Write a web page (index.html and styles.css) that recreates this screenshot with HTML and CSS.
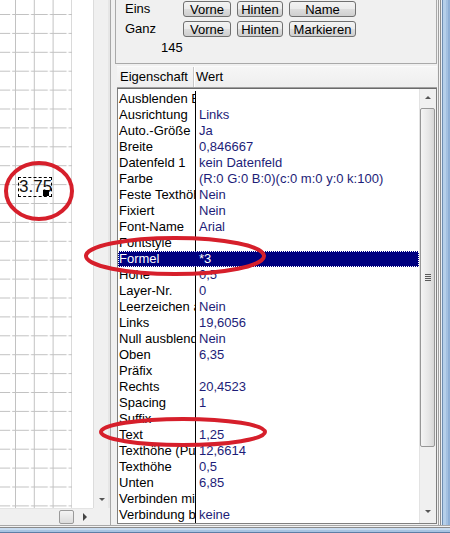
FILE: index.html
```html
<!DOCTYPE html>
<html lang="de">
<head>
<meta charset="utf-8">
<title>Eigenschaften</title>
<link rel="stylesheet" href="styles.css">
</head>
<body>
<div class="window">
  <div class="leftpane">
    <div class="canvas">
      <svg class="grid" width="93" height="508" viewBox="0 0 93 508">
        <defs>
          <pattern id="g" x="15" y="14" width="18.8" height="18.9" patternUnits="userSpaceOnUse">
            <path d="M0.5 0V18.9" stroke="#c2c2c2" stroke-width="1" fill="none"/>
            <path d="M1 0.5H18.8" stroke="#c2c2c2" stroke-width="1" fill="none" stroke-dasharray="13 2"/>
          </pattern>
        </defs>
        <rect x="0" y="0" width="72" height="508" fill="url(#g)"/>
      </svg>
      <div class="textfield">3.75<span class="handle"></span></div>
    </div>
    <div class="vscroll"><span class="tri-down"></span></div>
    <div class="hscroll"><span class="hthumb"></span><span class="tri-right"></span></div>
    <div class="corner"></div>
  </div>

  <div class="rightpane">
    <div class="group">
      <div class="btnrow">
        <span class="lbl">Eins</span>
        <button class="btn w48">Vorne</button>
        <button class="btn w46">Hinten</button>
        <button class="btn w67">Name</button>
      </div>
      <div class="btnrow">
        <span class="lbl">Ganz</span>
        <button class="btn w48">Vorne</button>
        <button class="btn w46">Hinten</button>
        <button class="btn w67">Markieren</button>
      </div>
      <div class="count">145</div>
    </div>

    <div class="header">
      <div class="hcell hname">Eigenschaft</div>
      <div class="hcell hval">Wert</div>
    </div>

    <div class="list">
      <div class="rows">
        <div class="row"><span class="n">Ausblenden Bei</span><span class="v"></span></div>
        <div class="row"><span class="n">Ausrichtung</span><span class="v">Links</span></div>
        <div class="row"><span class="n">Auto.-Größe</span><span class="v">Ja</span></div>
        <div class="row"><span class="n">Breite</span><span class="v">0,846667</span></div>
        <div class="row"><span class="n">Datenfeld 1</span><span class="v">kein Datenfeld</span></div>
        <div class="row"><span class="n">Farbe</span><span class="v">(R:0 G:0 B:0)(c:0 m:0 y:0 k:100)</span></div>
        <div class="row"><span class="n">Feste Texthöhe</span><span class="v">Nein</span></div>
        <div class="row"><span class="n">Fixiert</span><span class="v">Nein</span></div>
        <div class="row"><span class="n">Font-Name</span><span class="v">Arial</span></div>
        <div class="row"><span class="n">Fontstyle</span><span class="v"></span></div>
        <div class="row sel"><span class="n">Formel</span><span class="v">*3</span></div>
        <div class="row"><span class="n">Höhe</span><span class="v">0,5</span></div>
        <div class="row"><span class="n">Layer-Nr.</span><span class="v">0</span></div>
        <div class="row"><span class="n">Leerzeichen ausblenden</span><span class="v">Nein</span></div>
        <div class="row"><span class="n">Links</span><span class="v">19,6056</span></div>
        <div class="row"><span class="n">Null ausblenden</span><span class="v">Nein</span></div>
        <div class="row"><span class="n">Oben</span><span class="v">6,35</span></div>
        <div class="row"><span class="n">Präfix</span><span class="v"></span></div>
        <div class="row"><span class="n">Rechts</span><span class="v">20,4523</span></div>
        <div class="row"><span class="n">Spacing</span><span class="v">1</span></div>
        <div class="row"><span class="n">Suffix</span><span class="v"></span></div>
        <div class="row"><span class="n">Text</span><span class="v">1,25</span></div>
        <div class="row"><span class="n">Texthöhe (Punkt)</span><span class="v">12,6614</span></div>
        <div class="row"><span class="n">Texthöhe</span><span class="v">0,5</span></div>
        <div class="row"><span class="n">Unten</span><span class="v">6,85</span></div>
        <div class="row"><span class="n">Verbinden mit</span><span class="v"></span></div>
        <div class="row"><span class="n">Verbindung bei</span><span class="v">keine</span></div>
      </div>
      <div class="lscroll">
        <div class="sbtn"><span class="tri-up"></span></div>
        <div class="thumb"><span class="grip"></span></div>
        <div class="track"></div>
        <div class="sbtn"><span class="tri-down2"></span></div>
      </div>
    </div>
  </div>

  <div class="frame-right"></div>
  <div class="frame-bottom"></div>
</div>

<svg class="marks" width="450" height="533" viewBox="0 0 450 533">
  <ellipse cx="39" cy="191" rx="33" ry="28"/>
  <ellipse cx="175" cy="256" rx="89" ry="18"/>
  <ellipse cx="183" cy="432" rx="82" ry="13"/>
</svg>
</body>
</html>
```

FILE: styles.css
```css
* { box-sizing: border-box; }

html, body {
  margin: 0;
  padding: 0;
}

body {
  width: 450px;
  height: 533px;
  overflow: hidden;
  position: relative;
  background: #f0f0f0;
  font-family: "Liberation Sans", Arial, sans-serif;
  font-size: 13px;
  color: #000;
}

.window {
  display: grid;
  grid-template-columns: 110px 327px 13px;
  grid-template-rows: 525px 8px;
  width: 450px;
  height: 533px;
}

/* ---------- left canvas pane ---------- */
.leftpane {
  display: grid;
  grid-template-columns: 93px 17px;
  grid-template-rows: 508px 17px;
}

.canvas {
  position: relative;
  background: #fff;
  overflow: hidden;
}

.grid { display: block; }

.textfield {
  position: absolute;
  left: 18px;
  top: 177px;
  width: 34px;
  height: 20px;
  border: 1px dashed #000;
  font-size: 17px;
  line-height: 18px;
  color: #111;
}

.handle {
  position: absolute;
  left: 24px;
  top: 12px;
  width: 6px;
  height: 6px;
  background: #000;
}

.vscroll {
  position: relative;
  background: linear-gradient(to right, #dcdcdc 0 1px, #f0f0f0 1px 15px, #e6e6e6 15px);
}

.tri-down {
  position: absolute;
  left: 6px;
  bottom: 7px;
  border-left: 3px solid transparent;
  border-right: 3px solid transparent;
  border-top: 3px solid #555;
}

.hscroll {
  position: relative;
  background: linear-gradient(#e4e4e4 0 1px, #f0f0f0 1px);
}

.hthumb {
  position: absolute;
  left: 59px;
  top: 2px;
  width: 15px;
  height: 14px;
  border: 1px solid #9a9a9a;
  border-radius: 2px;
  background: linear-gradient(#f4f4f4, #dcdcdc);
}

.tri-right {
  position: absolute;
  left: 83px;
  top: 5px;
  border-top: 4px solid transparent;
  border-bottom: 4px solid transparent;
  border-left: 4px solid #444;
}

.corner {
  background: #f0f0f0;
}

/* ---------- right property pane ---------- */
.rightpane {
  border-left: 1px solid #a7a7a7;
  padding-left: 4px;
  display: flex;
  flex-direction: column;
  background: #f0f0f0;
}

.group {
  width: 322px;
  height: 64px;
  border: 1px solid #a9a9a9;
  border-top: none;
  padding: 1px 0 0 9px;
  flex: none;
}

.btnrow {
  display: flex;
  align-items: center;
  height: 16px;
  margin-bottom: 4px;
}

.lbl {
  width: 58px;
  line-height: 16px;
}

.btn {
  height: 16px;
  margin: 0 6px 0 0;
  padding: 0;
  border: 1px solid #707070;
  border-radius: 3px;
  background: linear-gradient(#f3f3f3 0%, #ebebeb 48%, #dddddd 52%, #cfcfcf 100%);
  font-family: "Liberation Sans", Arial, sans-serif;
  font-size: 13px;
  line-height: 13px;
  color: #000;
  text-align: center;
}

.w48 { width: 48px; }
.w46 { width: 46px; }
.w67 { width: 67px; }

.count {
  margin-top: 4px;
  padding-left: 36px;
  line-height: 14px;
}

.header {
  margin: 2px 0 0 2px;
  width: 320px;
  height: 22px;
  display: flex;
  border-top: 1px solid #fbfbfb;
  border-bottom: 1px solid #a0a0a0;
  background: linear-gradient(#f6f6f6, #eeeeee);
  flex: none;
}

.hcell {
  line-height: 20px;
  white-space: nowrap;
}

.hname {
  width: 77px;
  padding-left: 3px;
  border-right: 1px solid #c8c8c8;
  box-shadow: 1px 0 0 #fff;
}

.hval {
  padding-left: 2px;
}

.list {
  margin-left: 2px;
  width: 320px;
  height: 436px;
  border: 1px solid #7f7f7f;
  border-top: 1px solid #6a6a6a;
  background: #fff;
  display: flex;
  overflow: hidden;
  flex: none;
}

.rows {
  width: 301px;
  padding-top: 2px;
  overflow: hidden;
}

.row {
  display: flex;
  height: 16px;
  line-height: 16px;
  white-space: nowrap;
}

.n {
  width: 78px;
  flex: none;
  padding-left: 1px;
  overflow: hidden;
  border-right: 1px solid #000;
  color: #000;
}

.v {
  flex: 1;
  padding-left: 3px;
  overflow: hidden;
  color: #1d1d78;
}

.row.sel {
  background: #000080;
  outline: 1px dotted #ffffff;
  outline-offset: -1px;
}

.row.sel .n,
.row.sel .v {
  color: #fff;
  border-right-color: #000080;
}

.lscroll {
  width: 17px;
  display: flex;
  flex-direction: column;
  background: linear-gradient(to right, #e3e3e3 0 1px, #f0f0f0 1px);
}

.sbtn {
  height: 17px;
  position: relative;
  flex: none;
}

.tri-up {
  position: absolute;
  left: 6px;
  top: 7px;
  border-left: 3px solid transparent;
  border-right: 3px solid transparent;
  border-bottom: 3px solid #555;
}

.tri-down2 {
  position: absolute;
  left: 6px;
  top: 4px;
  border-left: 3px solid transparent;
  border-right: 3px solid transparent;
  border-top: 3px solid #555;
}

.thumb {
  height: 339px;
  margin: 2px 0 0 1px;
  width: 15px;
  border: 1px solid #979797;
  border-radius: 2px;
  background: linear-gradient(to right, #f5f5f5, #e6e6e6 60%, #d6d6d6);
  position: relative;
  flex: none;
}

.grip {
  position: absolute;
  left: 4px;
  top: 165px;
  width: 6px;
  height: 7px;
  background: repeating-linear-gradient(#5a5a5a 0 1px, transparent 1px 2px);
}

.track { flex: 1; }

/* ---------- window frame ---------- */
.frame-right {
  background: linear-gradient(to right,
    #f0f0f0 0 1px, #a0a0a0 1px 2px, #f4f4f4 2px 3px, #8c8c8c 3px 4px,
    #e8eef5 4px 5px, #6e8fb3 5px 6px,
    #b5cfe9 6px 9px, #a3c0e0 9px 11px, #8fb0d6 11px);
}

.frame-bottom {
  grid-column: 1 / 4;
  background: linear-gradient(
    #a8a8a8 0 1px, #f2f2f2 1px 2px, #8a8a8a 2px 3px,
    #c9dcf0 3px 5px, #a8c4e2 5px 7px, #5d7ea6 7px);
}

/* ---------- red annotation marks ---------- */
.marks {
  position: absolute;
  left: 0;
  top: 0;
  pointer-events: none;
}

.marks ellipse {
  fill: none;
  stroke: #d61f2b;
  stroke-width: 4;
}
```
